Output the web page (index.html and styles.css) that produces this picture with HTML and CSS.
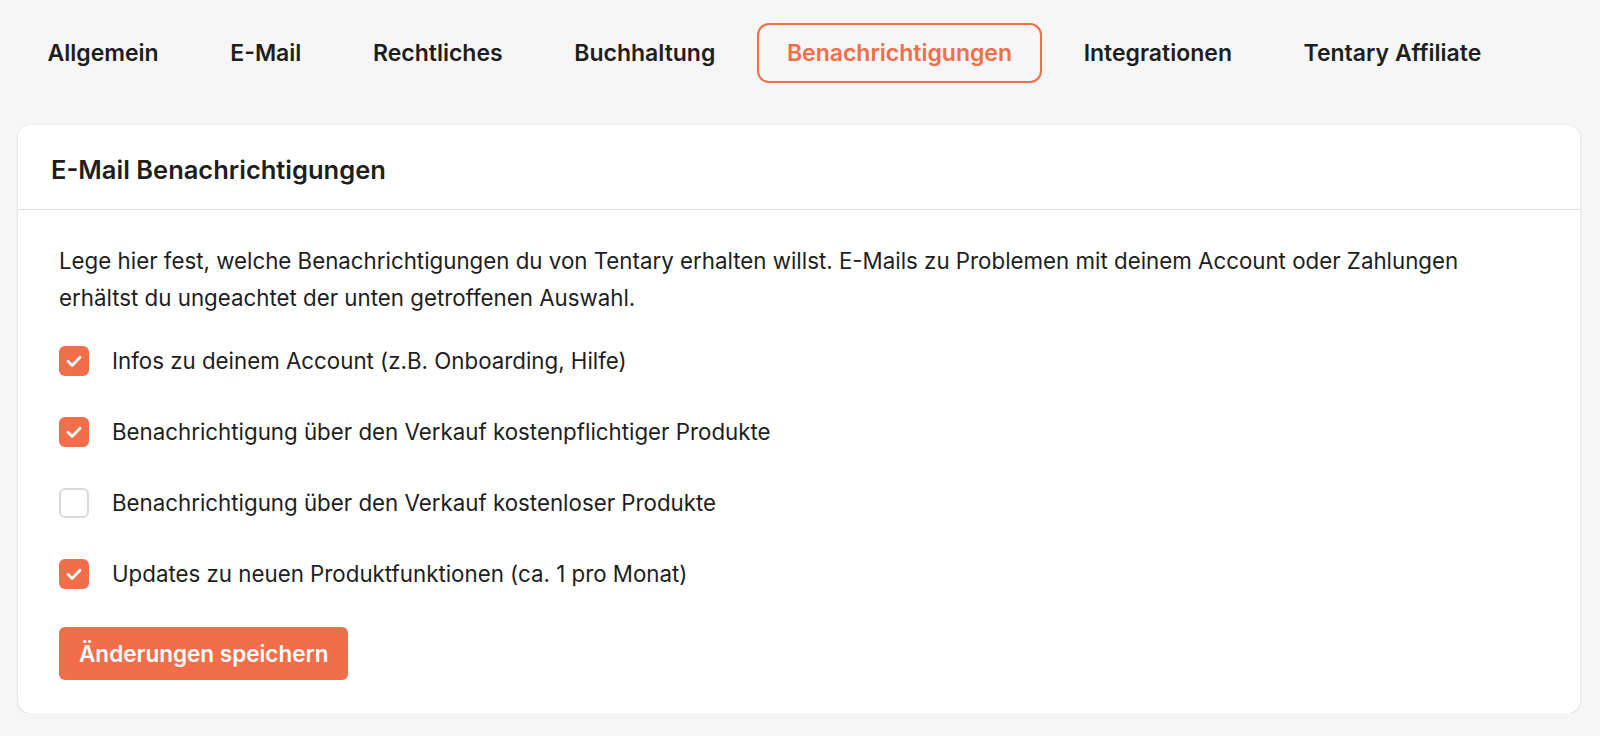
FILE: index.html
```html
<!DOCTYPE html>
<html lang="de">
<head>
<meta charset="utf-8">
<title>Einstellungen – Benachrichtigungen</title>
<link rel="stylesheet" href="styles.css">
</head>
<body>
<div class="page">
  <nav class="tabs">
    <a class="tab">Allgemein</a>
    <a class="tab">E-Mail</a>
    <a class="tab">Rechtliches</a>
    <a class="tab">Buchhaltung</a>
    <a class="tab active">Benachrichtigungen</a>
    <a class="tab">Integrationen</a>
    <a class="tab">Tentary Affiliate</a>
  </nav>
  <section class="card">
    <header class="card-header">E-Mail Benachrichtigungen</header>
    <div class="card-body">
      <p class="intro">Lege hier fest, welche Benachrichtigungen du von Tentary erhalten willst. E-Mails zu Problemen mit deinem Account oder Zahlungen erhältst du ungeachtet der unten getroffenen Auswahl.</p>
      <div class="options">
        <label class="option">
          <span class="box checked"><svg viewBox="0 0 30 30"><path d="M9 15.3l4.1 4.1 7.9-8.1"/></svg></span>
          <span>Infos zu deinem Account (z.B. Onboarding, Hilfe)</span>
        </label>
        <label class="option">
          <span class="box checked"><svg viewBox="0 0 30 30"><path d="M9 15.3l4.1 4.1 7.9-8.1"/></svg></span>
          <span>Benachrichtigung über den Verkauf kostenpflichtiger Produkte</span>
        </label>
        <label class="option">
          <span class="box"></span>
          <span>Benachrichtigung über den Verkauf kostenloser Produkte</span>
        </label>
        <label class="option">
          <span class="box checked"><svg viewBox="0 0 30 30"><path d="M9 15.3l4.1 4.1 7.9-8.1"/></svg></span>
          <span>Updates zu neuen Produktfunktionen (ca. 1 pro Monat)</span>
        </label>
      </div>
      <button class="save">Änderungen speichern</button>
    </div>
  </section>
</div>
</body>
</html>
```
FILE: styles.css
```css
* { box-sizing: border-box; }
html, body {
  margin: 0;
  padding: 0;
  background: #f6f6f6;
}
body {
  font-family: Inter, "Noto Sans", "Liberation Sans", sans-serif;
  color: #1e1e1e;
}
.page {
  padding: 23px 20px 0 18px;
}
.tabs {
  display: flex;
  gap: 12.6px;
  height: 60px;
}
.tab {
  display: flex;
  align-items: center;
  padding: 0 27.5px;
  height: 60px;
  font-size: 23px;
  font-weight: 600;
  color: #1e1e1e;
  border: 2px solid transparent;
  border-radius: 12px;
}
.tab.active {
  color: #f26d49;
  border-color: #f26d49;
}
.card {
  margin-top: 42px;
  background: #fff;
  border-radius: 12px;
  box-shadow: 0 1px 3px rgba(0,0,0,0.12), 0 0 1px rgba(0,0,0,0.08);
}
.card-header {
  height: 85px;
  display: flex;
  align-items: center;
  padding: 5px 33px 0;
  font-size: 25.5px;
  font-weight: 600;
  border-bottom: 1px solid #dcdcdc;
}
.card-body {
  padding: 32px 41px 33px;
  display: flex;
  flex-direction: column;
  align-items: flex-start;
}
.intro {
  margin: 0;
  font-size: 22.3px;
  line-height: 37px;
}
.options {
  margin-top: 26px;
  display: flex;
  flex-direction: column;
  gap: 34px;
}
.option {
  display: flex;
  align-items: center;
  gap: 23px;
  height: 37px;
  font-size: 22.3px;
}
.box {
  width: 30px;
  height: 30px;
  border-radius: 6px;
  border: 2px solid #dadada;
  background: #fff;
  flex: none;
}
.box.checked {
  border: none;
  background: #f26d49;
}
.box svg {
  width: 30px;
  height: 30px;
  display: block;
}
.box svg path {
  fill: none;
  stroke: #fff;
  stroke-width: 2.8;
  stroke-linecap: round;
  stroke-linejoin: round;
}
.save {
  margin-top: 35px;
  height: 53px;
  padding: 0 20px;
  border: none;
  border-radius: 6px;
  background: #f26d49;
  color: #fff;
  font-family: inherit;
  font-size: 22.5px;
  font-weight: 600;
}
```
